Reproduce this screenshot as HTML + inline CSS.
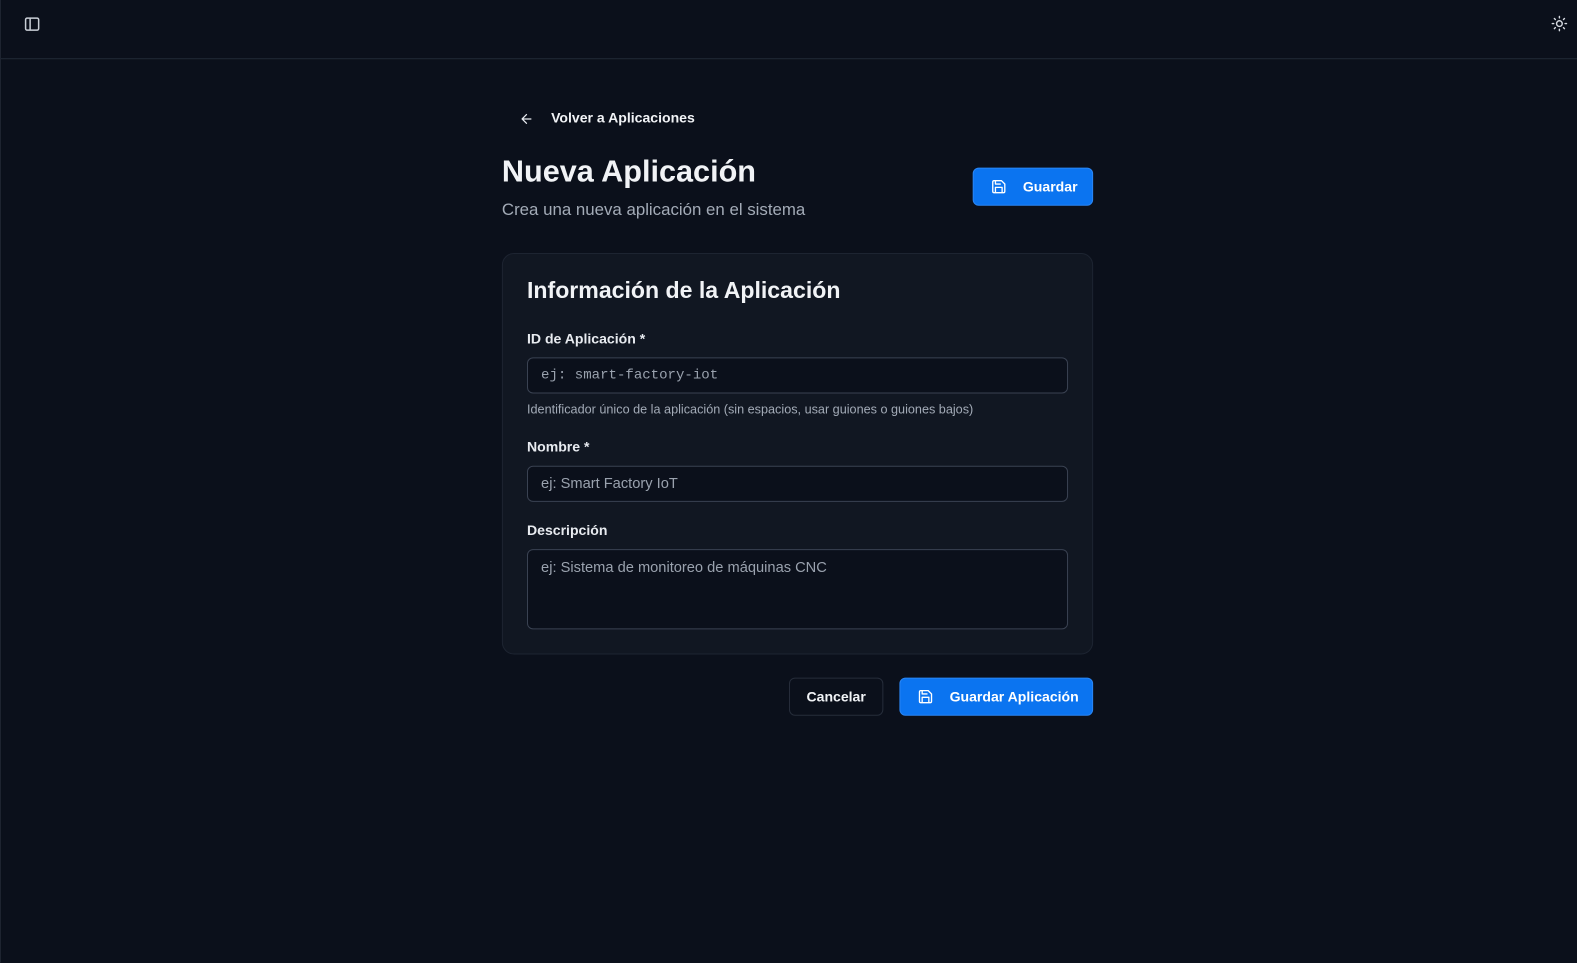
<!DOCTYPE html>
<html><head><meta charset="utf-8"><style>
*{box-sizing:border-box;margin:0;padding:0}
body{width:1577px;height:959px;background:#0b101b;font-family:"Liberation Sans",sans-serif;color:#f1f3f6;position:relative;overflow:hidden}
#w{position:absolute;left:0;top:0;width:1577px;height:959px;transform:scale(1.0038);transform-origin:0 0;border-left:1px solid #1e2430}
.hdr{position:absolute;left:0;top:0;width:1577px;height:59px;border-bottom:1px solid #222a37}
.abs{position:absolute}
.btn{position:absolute;display:flex;align-items:center;border-radius:6px;font-size:14px;font-weight:bold}
.blue{background:#0b74f0;color:#fff;border:1px solid #2a86f5}
.lbl{position:absolute;left:524px;font-size:14px;font-weight:bold;color:#e8ebf0}
.inp{position:absolute;left:524px;width:539px;border:1px solid #3a4252;border-radius:6px;background:#0b101b;color:#9aa2ae;font-size:14.6px;padding-left:13px}
</style></head><body><div id="w">
<div class="hdr"></div>
<svg class="abs" style="left:23px;top:16px" width="16" height="16" viewBox="0 0 16 16" fill="none" stroke="#c9ced6" stroke-width="1.5"><rect x="1.5" y="2" width="13" height="12" rx="1.5"/><path d="M6 2v12"/></svg>
<svg class="abs" style="left:1544px;top:15px" width="17" height="17" viewBox="0 0 24 24" fill="none" stroke="#d5d9e0" stroke-width="2" stroke-linecap="round"><circle cx="12" cy="12" r="4"/><path d="M12 2v2M12 20v2M4.9 4.9l1.4 1.4M17.7 17.7l1.4 1.4M2 12h2M20 12h2M6.3 17.7l-1.4 1.4M19.1 4.9l-1.4 1.4"/></svg>
<svg class="abs" style="left:516px;top:111px" width="15" height="15" viewBox="0 0 24 24" fill="none" stroke="#e8ebf0" stroke-width="2" stroke-linecap="round" stroke-linejoin="round"><path d="M19 12H5M12 19l-7-7 7-7"/></svg>
<div class="abs" style="left:548px;top:109px;font-size:14px;font-weight:bold">Volver a Aplicaciones</div>
<div class="abs" style="left:499px;top:154px;font-size:30.5px;font-weight:bold">Nueva Aplicación</div>
<div class="abs" style="left:499px;top:199px;font-size:16.8px;color:#a3abb7">Crea una nueva aplicación en el sistema</div>
<div class="btn blue" style="left:968px;top:167px;width:120px;height:38px;padding-left:17px">
<svg width="16" height="16" viewBox="0 0 24 24" fill="none" stroke="#fff" stroke-width="2" stroke-linejoin="round"><path d="M5 3h11l5 5v11a2 2 0 0 1-2 2H5a2 2 0 0 1-2-2V5a2 2 0 0 1 2-2z"/><path d="M17 21v-8H7v8M7 3v5h8"/></svg><span style="margin-left:16px">Guardar</span></div>
<div class="abs" style="left:499px;top:252px;width:589px;height:400px;background:#111722;border:1px solid #1d2431;border-radius:12px"></div>
<div class="abs" style="left:524px;top:276px;font-size:23px;font-weight:bold">Información de la Aplicación</div>
<div class="lbl" style="top:329px">ID de Aplicación *</div>
<div class="inp" style="top:356px;height:36px;line-height:35px;font-family:'Liberation Mono',monospace;font-size:14px">ej: smart-factory-iot</div>
<div class="abs" style="left:524px;top:401px;font-size:12.6px;color:#a3abb7">Identificador único de la aplicación (sin espacios, usar guiones o guiones bajos)</div>
<div class="lbl" style="top:437px">Nombre *</div>
<div class="inp" style="top:464px;height:36px;line-height:35px">ej: Smart Factory IoT</div>
<div class="lbl" style="top:520px">Descripción</div>
<div class="inp" style="top:547px;height:80px;padding-top:10px">ej: Sistema de monitoreo de máquinas CNC</div>
<div class="btn" style="left:785px;top:675px;width:94px;height:38px;border:1px solid #262d3a;justify-content:center;color:#f1f3f6">Cancelar</div>
<div class="btn blue" style="left:895px;top:675px;width:193px;height:38px;padding-left:17px">
<svg width="16" height="16" viewBox="0 0 24 24" fill="none" stroke="#fff" stroke-width="2" stroke-linejoin="round"><path d="M5 3h11l5 5v11a2 2 0 0 1-2 2H5a2 2 0 0 1-2-2V5a2 2 0 0 1 2-2z"/><path d="M17 21v-8H7v8M7 3v5h8"/></svg><span style="margin-left:16px">Guardar Aplicación</span></div>
</div></body></html>
